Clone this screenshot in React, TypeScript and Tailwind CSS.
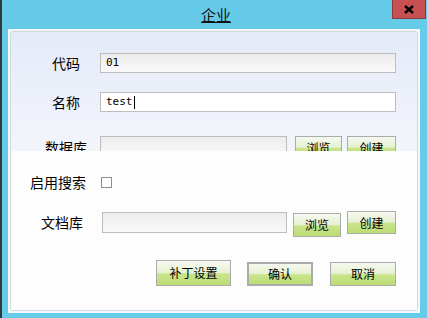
import React from 'react'

const green =
  'bg-[linear-gradient(to_bottom,#f6f9f0_0%,#e6f1d2_48%,#c9e58c_54%,#bcdc74_100%)]'

const Btn = ({ label, className = '' }: { label: string; className?: string }) => (
  <div
    className={`flex items-center justify-center text-[12px] text-black border border-[#ababab] ${green} ${className}`}
  >
    {label}
  </div>
)

const Field = ({ value, white = false, className = '' }: { value?: React.ReactNode; white?: boolean; className?: string }) => (
  <div
    className={`flex items-center pl-[5px] border border-[#bdbdbd] font-['DejaVu_Sans_Mono',monospace] text-[11px] text-black ${
      white ? 'bg-white' : 'bg-[linear-gradient(to_bottom,#ececec,#f9f9f9)]'
    } ${className}`}
  >
    {value}
  </div>
)

export default function App() {
  return (
    <div className="w-[427px] h-[318px] bg-[#66cbe9] border-l-2 border-[#2e3a40] flex flex-col font-['Noto_Sans_CJK_SC',sans-serif] overflow-hidden">
      {/* title bar */}
      <div className="relative h-[29px] flex items-center justify-center pl-[3px]">
        <span className="text-[15px] text-[#111] underline underline-offset-[1px] leading-none">企业</span>
        <div className="absolute right-[1px] top-0 w-[34px] h-[19px] bg-[#c75050] border border-t-0 border-[#8a3c3c] flex items-center justify-center">
          <svg width="10" height="9" viewBox="0 0 10 9">
            <path d="M1 1 L9 8 M9 1 L1 8" stroke="#000" strokeWidth="2.4" />
          </svg>
        </div>
      </div>

      {/* client */}
      <div className="ml-[6px] w-[412px] h-[284px] bg-[#f4f7fb] p-[2px]">
        <div className="h-full border border-[#d0d8e2] rounded-[3px] flex flex-col overflow-hidden text-[14px] text-black">
          {/* upper panel */}
          <div className="h-[119px] shrink-0 overflow-hidden bg-[linear-gradient(to_bottom,#e4eaf8,#f3f5fb)]">
            <div className="flex items-center mt-[21px] h-[20px]">
              <div className="w-[89px] pr-[20px] text-right">代码</div>
              <Field value="01" className="w-[296px] h-[20px]" />
            </div>
            <div className="flex items-center mt-[19px] h-[20px]">
              <div className="w-[89px] pr-[20px] text-right">名称</div>
              <Field
                white
                value={
                  <>
                    test<span className="inline-block w-px h-[13px] bg-black ml-[1px]" />
                  </>
                }
                className="w-[296px] h-[20px]"
              />
            </div>
            <div className="flex items-start mt-[24px]">
              <div className="w-[89px] pr-[13px] text-right leading-[22px]">数据库</div>
              <Field className="w-[187px] h-[21px]" />
              <Btn label="浏览" className="ml-[8px] w-[47px] h-[23px]" />
              <Btn label="创建" className="ml-[5px] w-[49px] h-[23px]" />
            </div>
          </div>

          {/* lower panel */}
          <div className="flex-1 bg-[#fdfdfd]">
            <div className="flex items-center mt-[21px] h-[20px]">
              <div className="w-[90px] pr-[15px] text-right">启用搜索</div>
              <div className="w-[11px] h-[11px] border border-[#8e8e8e] bg-white" />
            </div>
            <div className="flex items-start mt-[19px]">
              <div className="w-[91px] pr-[19px] text-right leading-[22px]">文档库</div>
              <Field className="mt-[1px] w-[185px] h-[21px]" />
              <Btn label="浏览" className="ml-[6px] mt-[2px] w-[48px] h-[24px]" />
              <Btn label="创建" className="ml-[6px] w-[49px] h-[23px]" />
            </div>
            <div className="flex items-start mt-[23px] ml-[145px]">
              <Btn label="补丁设置" className="w-[75px] h-[26px]" />
              <Btn label="确认" className="ml-[16px] mt-[2px] w-[66px] h-[24px] border-2 border-[#6e6e6e]" />
              <Btn label="取消" className="ml-[17px] mt-[2px] w-[66px] h-[24px]" />
            </div>
          </div>
        </div>
      </div>
    </div>
  )
}
